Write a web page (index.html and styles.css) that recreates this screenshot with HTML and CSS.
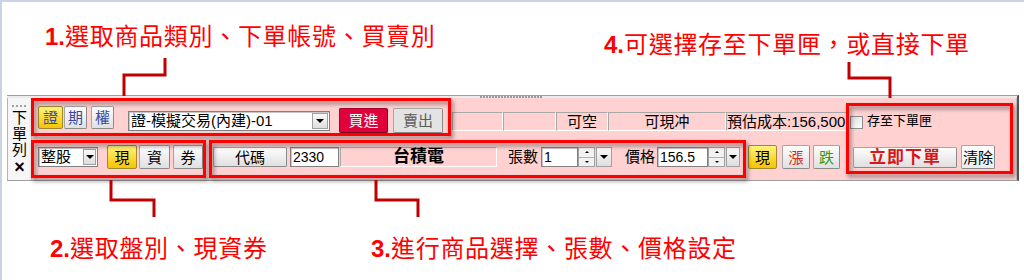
FILE: index.html
```html
<!DOCTYPE html>
<html lang="zh-Hant">
  <head>
    <meta charset="UTF-8" />
    <meta name="viewport" content="width=device-width, initial-scale=1.0" />
    <title>下單列說明</title>

    <link rel="stylesheet" href="styles.css">
  </head>
  <body>
    <div class="notes top">
      <div class="note n1"><b>1.</b>選取商品類別、下單帳號、買賣別</div>
      <div class="note n4"><b>4.</b>可選擇存至下單匣，或直接下單</div>
    </div>

    <div class="bar">
      <div class="grip"></div>
      <div class="side">
        <div class="dots"></div>
        <div class="side-title">下<br />單<br />列</div>
        <div class="side-close">×</div>
      </div>

      <div class="main">
        <div class="row r1">
          <div class="btn kind on k1">證</div>
          <div class="btn kind k2">期</div>
          <div class="btn kind k3">權</div>
          <div class="combo account">
            <span>證-模擬交易(內建)-01</span><i class="drop"></i>
          </div>
          <div class="btn buy">買進</div>
          <div class="btn sell">賣出</div>
          <div class="cells">
            <div class="cell c1"></div>
            <div class="cell c2"></div>
            <div class="cell c3">可空</div>
            <div class="cell c4">可現冲</div>
            <div class="cell c5">預估成本:156,500</div>
          </div>
          <i class="check"></i>
          <div class="save">存至下單匣</div>
        </div>

        <div class="row r2">
          <div class="combo board"><span>整股</span><i class="drop"></i></div>
          <div class="btn tall on t1">現</div>
          <div class="btn tall t2">資</div>
          <div class="btn tall t3">券</div>
          <div class="btn code">代碼</div>
          <div class="field symbol">2330</div>
          <div class="name">台積電</div>
          <div class="lbl l1">張數</div>
          <div class="spin qty">
            <div class="field">1</div>
            <div class="arrows"><i class="up"></i><i class="down"></i></div>
            <i class="drop"></i>
          </div>
          <div class="lbl l2">價格</div>
          <div class="spin price">
            <div class="field">156.5</div>
            <div class="arrows"><i class="up"></i><i class="down"></i></div>
            <i class="drop"></i>
          </div>
          <div class="btn tall on p1">現</div>
          <div class="btn tall up-btn p2">漲</div>
          <div class="btn tall down-btn p3">跌</div>
          <div class="btn send">立即下單</div>
          <div class="btn tall clear">清除</div>
        </div>
      </div>
    </div>

    <div class="notes bottom">
      <div class="note n2"><b>2.</b>選取盤別、現資券</div>
      <div class="note n3"><b>3.</b>進行商品選擇、張數、價格設定</div>
    </div>

    <!-- callout frames and leader lines drawn over the toolbar -->
    <div class="mark m1"></div>
    <div class="mark m2"></div>
    <div class="mark m3"></div>
    <div class="mark m4"></div>

    <svg class="links" width="1024" height="280" viewBox="0 0 1024 280">
      <polyline points="124,96 124,75 165,75 165,58" />
      <polyline points="849,62 849,78 890,78 890,98" />
      <polyline points="111,180 111,200 154,200 154,217" />
      <polyline points="376,180 376,200 418,200 418,217" />
    </svg>
  </body>
</html>
```

FILE: styles.css
```css
* {
  box-sizing: border-box;
}

body {
  margin: 0;
  width: 1024px;
  height: 280px;
  overflow: hidden;
  position: relative;
  background: #fff;
  box-shadow: inset 2px 2px 0 #c9d3e2;
  font-family: "Liberation Sans", "Noto Sans CJK TC", sans-serif;
  font-size: 15px;
  color: #000;
}

/* annotations */
.notes {
  display: flex;
  align-items: flex-start;
}
.notes.top {
  height: 95px;
  padding-left: 45px;
}
.notes.bottom {
  padding-top: 54px;
  padding-left: 50px;
}

.note {
  font-family: "Noto Sans CJK TC", sans-serif;
  font-size: 24px;
  line-height: 24px;
  letter-spacing: 0.7px;
  color: #f00;
  white-space: nowrap;
}
.note b {
  font-family: "Liberation Sans", sans-serif;
  letter-spacing: 0;
}

.n1 {
  width: 559px;
  margin-top: 23px;
}
.n4 {
  margin-top: 31px;
}
.n2 {
  width: 321px;
}

/* toolbar */
.bar {
  position: relative;
  display: flex;
  margin-left: 7px;
  width: 1012px;
  height: 86px;
  padding-top: 2px;
  background: #ececec;
  border-top: 1px solid #a0a0a0;
  border-bottom: 1px solid #a0a0a0;
  border-right: 2px solid #555;
}

.grip {
  position: absolute;
  top: 0;
  left: 473px;
  width: 62px;
  height: 2px;
  background: repeating-linear-gradient(90deg, #9a9a9a 0 2px, transparent 2px 3px);
}

.side {
  width: 25px;
  display: flex;
  flex-direction: column;
  align-items: center;
  background: #f6f6f6;
  border-left: 1px solid #b4b4b4;
  border-right: 1px solid #c4c4c4;
}
.dots {
  margin-top: 7px;
  width: 15px;
  height: 2px;
  background: repeating-linear-gradient(90deg, #a0a0a0 0 2px, transparent 2px 4px);
}
.side-title {
  margin-top: 3px;
  line-height: 16px;
  text-align: center;
}
.side-close {
  margin-top: auto;
  margin-bottom: 4px;
  font-size: 18px;
  font-weight: bold;
  line-height: 18px;
}

.main {
  flex: 1;
  background: #ffd1d1;
  border-right: 1px solid #bdbdbd;
}

.row {
  display: flex;
  align-items: flex-start;
}
.r1 {
  height: 40px;
}
.r2 {
  height: 42px;
}

.btn {
  display: flex;
  align-items: center;
  justify-content: center;
  border: 1px solid #a6a6a6;
  border-right-color: #8a8a8a;
  border-bottom-color: #8a8a8a;
  border-radius: 2px;
  background: linear-gradient(#fdfdfd, #e0e0e0);
  line-height: 1;
  white-space: nowrap;
}
.btn.on {
  background: linear-gradient(#fff37e, #f7c400);
  border-color: #a08a30;
}

.kind {
  margin-top: 8px;
  height: 23px;
  color: #3848a4;
}
.k1 { margin-left: 6px; width: 25px; }
.k2 { margin-left: 1px; width: 23px; }
.k3 { margin-left: 4px; width: 23px; }

.combo {
  display: flex;
  height: 20px;
  background: #fff;
  border: 1px solid #808080;
  box-shadow: inset 1px 1px 0 #c8c8c8;
}
.combo span {
  flex: 1;
  padding-left: 2px;
  line-height: 18px;
  white-space: nowrap;
}
.account {
  margin-left: 14px;
  margin-top: 13px;
  width: 202px;
}

.drop {
  width: 16px;
  margin: 1px;
  display: flex;
  align-items: center;
  justify-content: center;
  background: linear-gradient(#fafafa, #dedede);
  border: 1px solid #a0a0a0;
}
.drop::after {
  content: "";
  border-left: 4px solid transparent;
  border-right: 4px solid transparent;
  border-top: 4px solid #000;
}

.buy {
  margin-left: 9px;
  margin-top: 10px;
  width: 49px;
  height: 25px;
  background: #e0003c;
  border-color: #b0002c #7a001c #7a001c #b0002c;
  color: #fff;
}
.sell {
  margin-left: 5px;
  margin-top: 10px;
  width: 50px;
  height: 25px;
  background: #e3e3e3;
  color: #5c5c5c;
}

.cells {
  display: flex;
  margin-left: 9px;
  margin-top: 14px;
  height: 19px;
}
.cell {
  border: 1px solid;
  border-color: #a8a8a8 #fff #fff #a8a8a8;
  line-height: 17px;
  text-align: center;
  white-space: nowrap;
}
.c1 { width: 51px; }
.c2 { width: 53px; }
.c3 { width: 52px; }
.c4 { width: 118px; }
.c5 {
  width: 121px;
  text-align: left;
}

.check {
  margin-left: 3px;
  margin-top: 18px;
  width: 13px;
  height: 13px;
  background: linear-gradient(135deg, #dcdcdc, #fff);
  border: 1px solid #8c8c8c;
}
.save {
  margin-left: 4px;
  margin-top: 16px;
  font-size: 13px;
  line-height: 14px;
}

.board {
  margin-left: 6px;
  margin-top: 9px;
  width: 60px;
}
.board .drop {
  width: 13px;
}

.tall {
  margin-top: 7px;
  height: 24px;
}
.t1 { margin-left: 9px; width: 30px; }
.t2 { margin-left: 2px; width: 31px; }
.t3 { margin-left: 3px; width: 30px; }

.code {
  margin-left: 10px;
  margin-top: 9px;
  width: 74px;
  height: 20px;
}

.field {
  height: 20px;
  padding-left: 2px;
  background: #fff;
  border: 1px solid #808080;
  box-shadow: inset 1px 1px 0 #c8c8c8;
  font-size: 14px;
  line-height: 18px;
}
.symbol {
  margin-left: 3px;
  margin-top: 9px;
  width: 49px;
}

.name {
  margin-left: 1px;
  margin-top: 9px;
  width: 157px;
  height: 20px;
  border: 1px solid;
  border-color: #a8a8a8 #fff #fff #a8a8a8;
  font-size: 17px;
  font-weight: bold;
  line-height: 18px;
  text-align: center;
}

.lbl {
  margin-top: 9px;
  width: 30px;
  line-height: 20px;
}
.l1 { margin-left: 11px; }
.l2 { margin-left: 13px; }

.spin {
  display: flex;
  margin-top: 9px;
  height: 20px;
}
.qty { margin-left: 3px; }
.qty .field { width: 37px; }
.price { margin-left: 2px; }
.price .field { width: 51px; }
.spin .drop {
  margin: 0 0 0 1px;
  width: 16px;
}
.price .drop { width: 14px; }

.arrows {
  width: 17px;
  display: flex;
  flex-direction: column;
  border: 1px solid #a0a0a0;
  background: #f2f2f2;
}
.arrows i {
  flex: 1;
  display: flex;
  align-items: center;
  justify-content: center;
}
.arrows .up {
  border-bottom: 1px solid #b0b0b0;
}
.arrows .up::after {
  content: "";
  border-left: 2px solid transparent;
  border-right: 2px solid transparent;
  border-bottom: 2px solid #000;
}
.arrows .down::after {
  content: "";
  border-left: 2px solid transparent;
  border-right: 2px solid transparent;
  border-top: 2px solid #000;
}

.p1 { margin-left: 8px; width: 29px; }
.p2 { margin-left: 5px; width: 28px; }
.p3 { margin-left: 3px; width: 27px; }
.up-btn { color: #e02020; }
.down-btn { color: #2e9a20; }

.send {
  margin-left: 13px;
  margin-top: 9px;
  width: 104px;
  height: 21px;
  color: #d81818;
  font-size: 17px;
  font-weight: bold;
  letter-spacing: 1px;
}
.clear {
  margin-left: 4px;
  width: 34px;
  background: linear-gradient(#fff, #ececec);
}

/* callouts */
.mark {
  position: absolute;
  border: 3px solid #f00;
  filter: drop-shadow(2px 3px 2px rgba(0, 0, 0, 0.45));
}
.m1 { left: 31px; top: 98px; width: 420px; height: 38px; }
.m2 { left: 31px; top: 140px; width: 175px; height: 38px; }
.m3 { left: 209px; top: 140px; width: 537px; height: 38px; }
.m4 { left: 846px; top: 103px; width: 167px; height: 71px; }

.links {
  position: absolute;
  top: 0;
  left: 0;
  pointer-events: none;
}
.links polyline {
  fill: none;
  stroke: #c00000;
  stroke-width: 3;
}
```
